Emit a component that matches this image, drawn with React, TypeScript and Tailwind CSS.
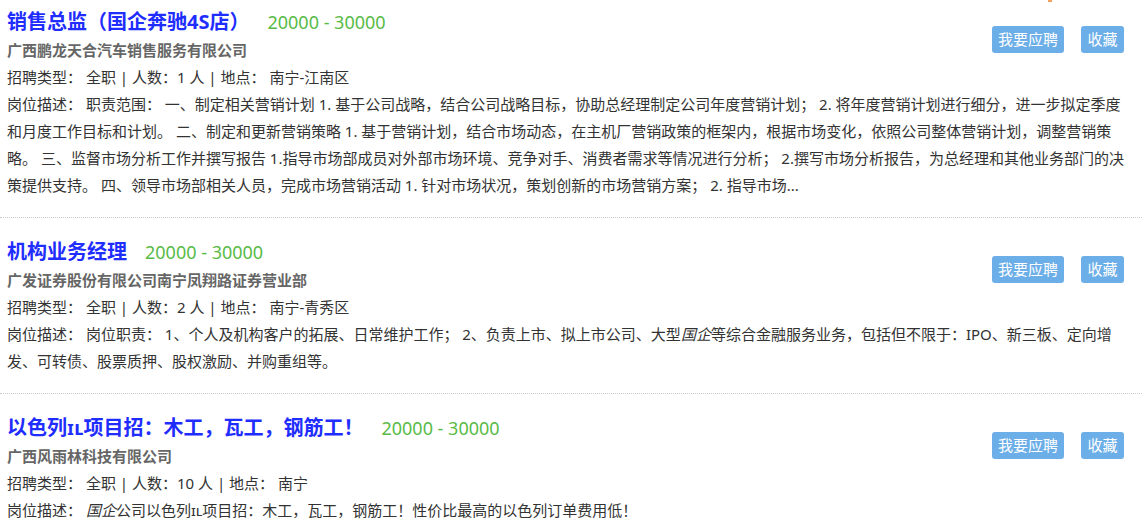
import React from "react";

type Job = {
  title: React.ReactNode;
  salary: string;
  company: string;
  count: string;
  place: string;
  desc: React.ReactNode;
};

const jobs: Job[] = [
  {
    title: "销售总监（国企奔驰4S店）",
    salary: "20000 - 30000",
    company: "广西鹏龙天合汽车销售服务有限公司",
    count: "1",
    place: "南宁-江南区",
    desc: "职责范围： 一、制定相关营销计划 1. 基于公司战略，结合公司战略目标，协助总经理制定公司年度营销计划； 2. 将年度营销计划进行细分，进一步拟定季度和月度工作目标和计划。 二、制定和更新营销策略 1. 基于营销计划，结合市场动态，在主机厂营销政策的框架内，根据市场变化，依照公司整体营销计划，调整营销策略。 三、监督市场分析工作并撰写报告 1.指导市场部成员对外部市场环境、竞争对手、消费者需求等情况进行分析； 2.撰写市场分析报告，为总经理和其他业务部门的决策提供支持。 四、领导市场部相关人员，完成市场营销活动 1. 针对市场状况，策划创新的市场营销方案； 2. 指导市场...",
  },
  {
    title: "机构业务经理",
    salary: "20000 - 30000",
    company: "广发证券股份有限公司南宁凤翔路证券营业部",
    count: "2",
    place: "南宁-青秀区",
    desc: (
      <>
        岗位职责： 1、个人及机构客户的拓展、日常维护工作； 2、负责上市、拟上市公司、大型<em>国企</em>等综合金融服务业务，包括但不限于：IPO、新三板、定向增发、可转债、股票质押、股权激励、并购重组等。
      </>
    ),
  },
  {
    title: "以色列ɪʟ项目招：木工，瓦工，钢筋工！",
    salary: "20000 - 30000",
    company: "广西风雨林科技有限公司",
    count: "10",
    place: "南宁",
    desc: (
      <>
        <em>国企</em>公司以色列ɪʟ项目招：木工，瓦工，钢筋工！性价比最高的以色列订单费用低！
      </>
    ),
  },
];

export default function App() {
  return (
    <div
      className="relative w-[1142px] bg-white text-[#333] text-[15px]"
      style={{ fontFamily: '"Noto Sans", "Noto Sans CJK SC", sans-serif' }}
    >
      <span className="absolute left-[1048px] top-0 h-[2px] w-[4px] bg-[#f5a25d]" />
      {jobs.map((job, i) => (
        <div
          key={i}
          className={`border-b border-dotted border-[#c8c8c8] pl-[7px] pr-[10px] pb-[18px] ${
            i === 0 ? "pt-[7px]" : "pt-[19px]"
          }`}
        >
          <div className="float-right mr-[8px] mt-[19px] flex gap-[17px]">
            <button className="h-[27px] w-[72px] rounded-[3px] bg-[#6caee8] text-center text-[15px] leading-[27px] text-white">
              我要应聘
            </button>
            <button className="h-[27px] w-[43px] rounded-[3px] bg-[#6caee8] text-center text-[15px] leading-[27px] text-white">
              收藏
            </button>
          </div>
          <div className="flex items-baseline leading-[30px]">
            <span className="text-[20px] font-bold text-[#1f2dff]">{job.title}</span>
            <span className="ml-[18px] text-[18px] text-[#58bb46]">{job.salary}</span>
          </div>
          <div className="font-bold leading-[27px] text-[#666]">{job.company}</div>
          <div className="leading-[27px]">
            招聘类型： 全职 | 人数：{job.count} 人 | 地点： {job.place}
          </div>
          <div className="leading-[27px]">岗位描述： {job.desc}</div>
        </div>
      ))}
    </div>
  );
}
